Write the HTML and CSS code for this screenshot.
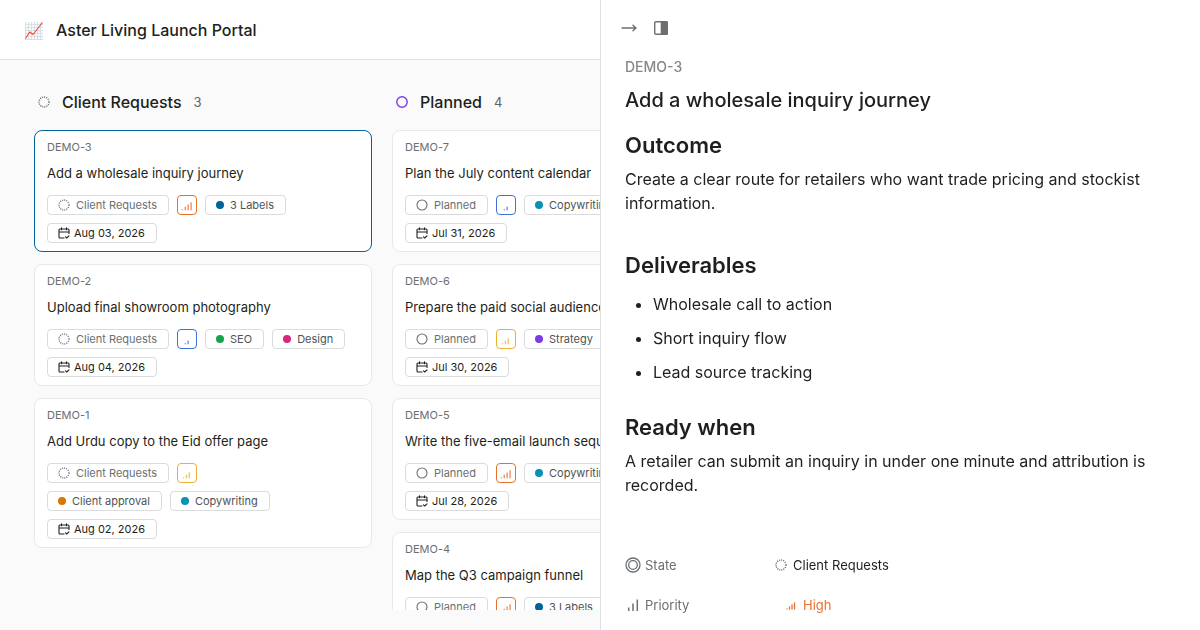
FILE: index.html
```html
<!DOCTYPE html>
<html lang="en">
<head>
<meta charset="UTF-8">
<meta name="viewport" content="width=device-width, initial-scale=1">
<title>Aster Living Launch Portal</title>
<link rel="stylesheet" href="styles.css">
</head>
<body>

<!-- shared icons -->
<svg class="sprite" aria-hidden="true">
	<symbol id="backlog" viewBox="0 0 12 12"><circle cx="6" cy="6" r="5" fill="none" stroke="currentColor" stroke-width="1.3" stroke-dasharray="1.05 1.05"/></symbol>
	<symbol id="planned" viewBox="0 0 12 12"><circle cx="6" cy="6" r="5" fill="none" stroke="currentColor" stroke-width="1.1"/></symbol>
	<symbol id="planned-bold" viewBox="0 0 12 12"><circle cx="6" cy="6" r="5.2" fill="none" stroke="currentColor" stroke-width="1.4"/></symbol>
	<symbol id="calendar" viewBox="0 0 12 12"><path d="M3.5 .8v2M8.5 .8v2M1 5h10M11 6.5V3a1 1 0 0 0-1-1H2a1 1 0 0 0-1 1v7a1 1 0 0 0 1 1h4M7.5 9.8l1.2 1.2L11 8.8" fill="none" stroke="currentColor" stroke-width="1.1" stroke-linecap="round" stroke-linejoin="round"/></symbol>
	<symbol id="high" viewBox="-2 0 24 24"><path d="M2 20h.01M7 20v-4M12 20v-8M17 20V8" fill="none" stroke="currentColor" stroke-width="2.6" stroke-linecap="round"/></symbol>
	<symbol id="medium" viewBox="-4 0 24 24"><path d="M2 20h.01M7 20v-4M12 20v-8" fill="none" stroke="currentColor" stroke-width="2.6" stroke-linecap="round"/></symbol>
	<symbol id="low" viewBox="-7 0 24 24"><path d="M2 20h.01M7 20v-4" fill="none" stroke="currentColor" stroke-width="2.6" stroke-linecap="round"/></symbol>
</svg>

<div class="app">
	<div class="portal">
		<header class="topbar">
			<svg class="logo" viewBox="0 0 20 20" aria-hidden="true">
				<rect x="1" y="2" width="18" height="18" fill="#f7f9fa"/>
				<path d="M1.5 2v18M4.5 2v18M7.5 2v18M10.5 2v18M13.5 2v18M16.5 2v18M1 4.5h18M1 7.5h18M1 10.5h18M1 13.5h18M1 16.5h18M1 19.5h18" stroke="#cfd8dc" stroke-width=".7"/>
				<path d="M1.5 18.5L5.7 12l3.3 2.5L18.5 2.5" fill="none" stroke="#f44336" stroke-width="1.1" stroke-linejoin="round"/>
			</svg>
			<h1>Aster Living Launch Portal</h1>
		</header>

		<main class="board">
			<section class="column">
				<h2 class="column-head"><svg class="state-icon slate"><use href="#backlog"/></svg>Client Requests<span class="count">3</span></h2>
				<a class="card active" href="#demo-3">
					<span class="key">DEMO-3</span>
					<span class="title">Add a wholesale inquiry journey</span>
					<span class="chips">
						<span class="chip state"><svg><use href="#backlog"/></svg>Client Requests</span>
						<span class="chip priority high"><svg><use href="#high"/></svg></span>
						<span class="chip"><i class="dot navy"></i>3 Labels</span>
						<span class="due"><span class="chip date"><svg><use href="#calendar"/></svg>Aug 03, 2026</span></span>
					</span>
				</a>
				<a class="card" href="#demo-2">
					<span class="key">DEMO-2</span>
					<span class="title">Upload final showroom photography</span>
					<span class="chips">
						<span class="chip state"><svg><use href="#backlog"/></svg>Client Requests</span>
						<span class="chip priority low"><svg><use href="#low"/></svg></span>
						<span class="labels">
							<span class="chip"><i class="dot green"></i>SEO</span>
							<span class="chip"><i class="dot pink"></i>Design</span>
						</span>
						<span class="due"><span class="chip date"><svg><use href="#calendar"/></svg>Aug 04, 2026</span></span>
					</span>
				</a>
				<a class="card" href="#demo-1">
					<span class="key">DEMO-1</span>
					<span class="title">Add Urdu copy to the Eid offer page</span>
					<span class="chips">
						<span class="chip state"><svg><use href="#backlog"/></svg>Client Requests</span>
						<span class="chip priority medium"><svg><use href="#medium"/></svg></span>
						<span class="labels">
							<span class="chip"><i class="dot orange"></i>Client approval</span>
							<span class="chip"><i class="dot teal"></i>Copywriting</span>
						</span>
						<span class="due"><span class="chip date"><svg><use href="#calendar"/></svg>Aug 02, 2026</span></span>
					</span>
				</a>
			</section>

			<section class="column">
				<h2 class="column-head"><svg class="state-icon violet"><use href="#planned-bold"/></svg>Planned<span class="count">4</span></h2>
				<a class="card" href="#demo-7">
					<span class="key">DEMO-7</span>
					<span class="title">Plan the July content calendar</span>
					<span class="chips">
						<span class="chip state"><svg><use href="#planned"/></svg>Planned</span>
						<span class="chip priority low"><svg><use href="#low"/></svg></span>
						<span class="chip"><i class="dot teal"></i>Copywriting</span>
						<span class="due"><span class="chip date"><svg><use href="#calendar"/></svg>Jul 31, 2026</span></span>
					</span>
				</a>
				<a class="card" href="#demo-6">
					<span class="key">DEMO-6</span>
					<span class="title">Prepare the paid social audience</span>
					<span class="chips">
						<span class="chip state"><svg><use href="#planned"/></svg>Planned</span>
						<span class="chip priority medium"><svg><use href="#medium"/></svg></span>
						<span class="chip"><i class="dot purple"></i>Strategy</span>
						<span class="due"><span class="chip date"><svg><use href="#calendar"/></svg>Jul 30, 2026</span></span>
					</span>
				</a>
				<a class="card" href="#demo-5">
					<span class="key">DEMO-5</span>
					<span class="title">Write the five-email launch sequence</span>
					<span class="chips">
						<span class="chip state"><svg><use href="#planned"/></svg>Planned</span>
						<span class="chip priority high"><svg><use href="#high"/></svg></span>
						<span class="chip"><i class="dot teal"></i>Copywriting</span>
						<span class="due"><span class="chip date"><svg><use href="#calendar"/></svg>Jul 28, 2026</span></span>
					</span>
				</a>
				<a class="card" href="#demo-4">
					<span class="key">DEMO-4</span>
					<span class="title">Map the Q3 campaign funnel</span>
					<span class="chips">
						<span class="chip state"><svg><use href="#planned"/></svg>Planned</span>
						<span class="chip priority high"><svg><use href="#high"/></svg></span>
						<span class="chip"><i class="dot navy"></i>3 Labels</span>
					</span>
				</a>
			</section>
		</main>
	</div>

	<aside class="peek">
		<div class="peek-tools">
			<button type="button" aria-label="Close panel">
				<svg viewBox="0 0 16 16"><path d="M1 8h14M12 5.2L15 8l-3 2.8" fill="none" stroke="currentColor" stroke-width="1.4" stroke-linecap="round" stroke-linejoin="round"/></svg>
			</button>
			<button type="button" aria-label="Panel layout">
				<svg viewBox="0 0 16 16"><rect x="1.7" y="1.7" width="12.6" height="12.6" rx="1.2" fill="none" stroke="currentColor" stroke-width="1.4"/><path d="M7.7 1h5.8A1.5 1.5 0 0 1 15 2.5v11a1.5 1.5 0 0 1-1.5 1.5H7.7z" fill="currentColor"/></svg>
			</button>
		</div>

		<p class="peek-key">DEMO-3</p>
		<h2 class="peek-title">Add a wholesale inquiry journey</h2>

		<div class="description">
			<h3>Outcome</h3>
			<p>Create a clear route for retailers who want trade pricing and stockist information.</p>
			<h3>Deliverables</h3>
			<ul>
				<li>Wholesale call to action</li>
				<li>Short inquiry flow</li>
				<li>Lead source tracking</li>
			</ul>
			<h3>Ready when</h3>
			<p>A retailer can submit an inquiry in under one minute and attribution is recorded.</p>
		</div>

		<dl class="properties">
			<dt>
				<svg viewBox="0 0 16 16"><g fill="none" stroke="currentColor" stroke-width="1.3"><circle cx="8" cy="8" r="7"/><circle cx="8" cy="8" r="4.3"/></g></svg>
				State
			</dt>
			<dd><svg class="slate"><use href="#backlog"/></svg>Client Requests</dd>
			<dt>
				<svg viewBox="0 0 16 16"><path d="M3.7 10.5v3.5M8 6.5v7.5M12.3 2.5v11.5" fill="none" stroke="currentColor" stroke-width="1.5"/></svg>
				Priority
			</dt>
			<dd class="value-high"><svg><use href="#high"/></svg>High</dd>
		</dl>
	</aside>
</div>

</body>
</html>
```
FILE: styles.css
```css
*{
	box-sizing:border-box;
}
body{
	margin:0;
	font-family:Inter, "Liberation Sans", sans-serif;
	font-size:13px;
	color:#1d1f20;
	background-color:#fafafa;
}
h1,h2,h3,p,ul,dl,dd{
	margin:0;
}
svg{
	flex:none;
}
.sprite{
	position:absolute;
	width:0;
	height:0;
}
.app{
	display:flex;
	height:100vh;
	overflow:hidden;
}
.portal{
	flex:1;
	min-width:0;
	display:flex;
	flex-direction:column;
}

/* top bar */
.topbar{
	display:flex;
	align-items:center;
	gap:12px;
	height:60px;
	padding:0 24px;
	background-color:#fff;
	border-bottom:1px solid #e0e1e2;
}
.topbar h1{
	font-size:16px;
	font-weight:500;
	line-height:24px;
}
.logo{
	width:20px;
	height:20px;
}

/* board */
.board{
	flex:1;
	min-height:0;
	display:flex;
	gap:20px;
	margin-bottom:20px;
	padding:24px 34px 0;
	overflow:hidden;
}
.column{
	flex:none;
	width:338px;
}
.column-head{
	display:flex;
	align-items:center;
	height:36px;
	margin-bottom:10px;
	padding-left:4px;
	font-size:16px;
	font-weight:500;
}
.state-icon{
	width:12px;
	height:12px;
	margin-right:12px;
}
.count{
	margin-left:12px;
	font-size:13px;
	font-weight:400;
	color:#5f6366;
}
.slate{
	color:#60646c;
}
.violet{
	color:#7c3aed;
}

/* work item cards */
.card{
	display:block;
	margin-bottom:12px;
	padding:8px 12px;
	border:1px solid #e8e9ea;
	border-radius:8px;
	background-color:#fff;
	color:inherit;
	text-decoration:none;
}
.card.active{
	border-color:#006399;
}
.key{
	display:block;
	font-size:11px;
	line-height:16px;
	color:#6b6f72;
}
.title{
	display:block;
	margin:8px 0 12px;
	line-height:20px;
	white-space:nowrap;
	overflow:hidden;
	text-overflow:ellipsis;
}
.chips,.labels{
	display:flex;
	flex-wrap:wrap;
	gap:8px;
}
.due{
	display:flex;
	flex-basis:100%;
}
.chip{
	display:flex;
	align-items:center;
	gap:6px;
	height:20px;
	padding:0 11px 0 10px;
	border:1px solid #d9dbdc;
	border-radius:4px;
	font-size:11px;
	color:#4e5355;
	white-space:nowrap;
}
.chip svg{
	width:12px;
	height:12px;
}
.chip.state{
	color:#6b6f72;
}
.chip.date{
	gap:4px;
	color:#1d1f20;
}
.chip.priority{
	justify-content:center;
	width:20px;
	padding:0;
}
.chip.priority svg{
	width:14px;
	height:14px;
	opacity:.7;
}
.priority.high{
	color:#e8702a;
	border-color:#e8702a;
}
.priority.medium{
	color:#ecb030;
	border-color:#ecb030;
}
.priority.low{
	color:#3b72dc;
	border-color:#3b72dc;
}
.dot{
	width:8px;
	height:8px;
	border-radius:50%;
}
.navy{ background-color:#006399; }
.green{ background-color:#16a34a; }
.pink{ background-color:#db2777; }
.orange{ background-color:#d97706; }
.teal{ background-color:#0891b2; }
.purple{ background-color:#7c3aed; }

/* side panel */
.peek{
	width:50%;
	padding:20px 24px;
	background-color:#fff;
	border-left:1px solid #e0e1e2;
	overflow:hidden;
	will-change:transform;
}
.peek-tools{
	display:flex;
	gap:16px;
	margin-left:-4px;
}
.peek-tools button{
	display:flex;
	padding:0;
	border:0;
	background:none;
	color:#6b6f72;
	cursor:pointer;
}
.peek-tools svg{
	width:16px;
	height:16px;
}
.peek-key{
	margin-top:21px;
	font-size:14px;
	font-weight:500;
	line-height:20px;
	color:#85898c;
}
.peek-title{
	margin-top:8px;
	font-size:20px;
	font-weight:500;
	line-height:30px;
}
.description{
	font-size:16px;
	line-height:24px;
}
.description h3{
	padding-top:16px;
	font-size:22px;
	font-weight:600;
	line-height:28px;
}
.description p{
	margin:8px 0 20px;
}
.description ul{
	margin:13px 0 3px;
	padding-left:28px;
}
.description li{
	padding-bottom:10px;
}
.properties{
	display:grid;
	grid-template-columns:150px 1fr;
	row-gap:20px;
	margin-top:58px;
	line-height:20px;
}
.properties dt,.properties dd{
	display:flex;
	align-items:center;
}
.properties dt{
	gap:4px;
	color:#6b6f72;
}
.properties dt svg{
	width:16px;
	height:16px;
}
.properties dd{
	gap:6px;
}
.properties dd svg{
	width:12px;
	height:12px;
}
.properties .value-high{
	padding-left:10px;
	color:#e8702a;
}
```
